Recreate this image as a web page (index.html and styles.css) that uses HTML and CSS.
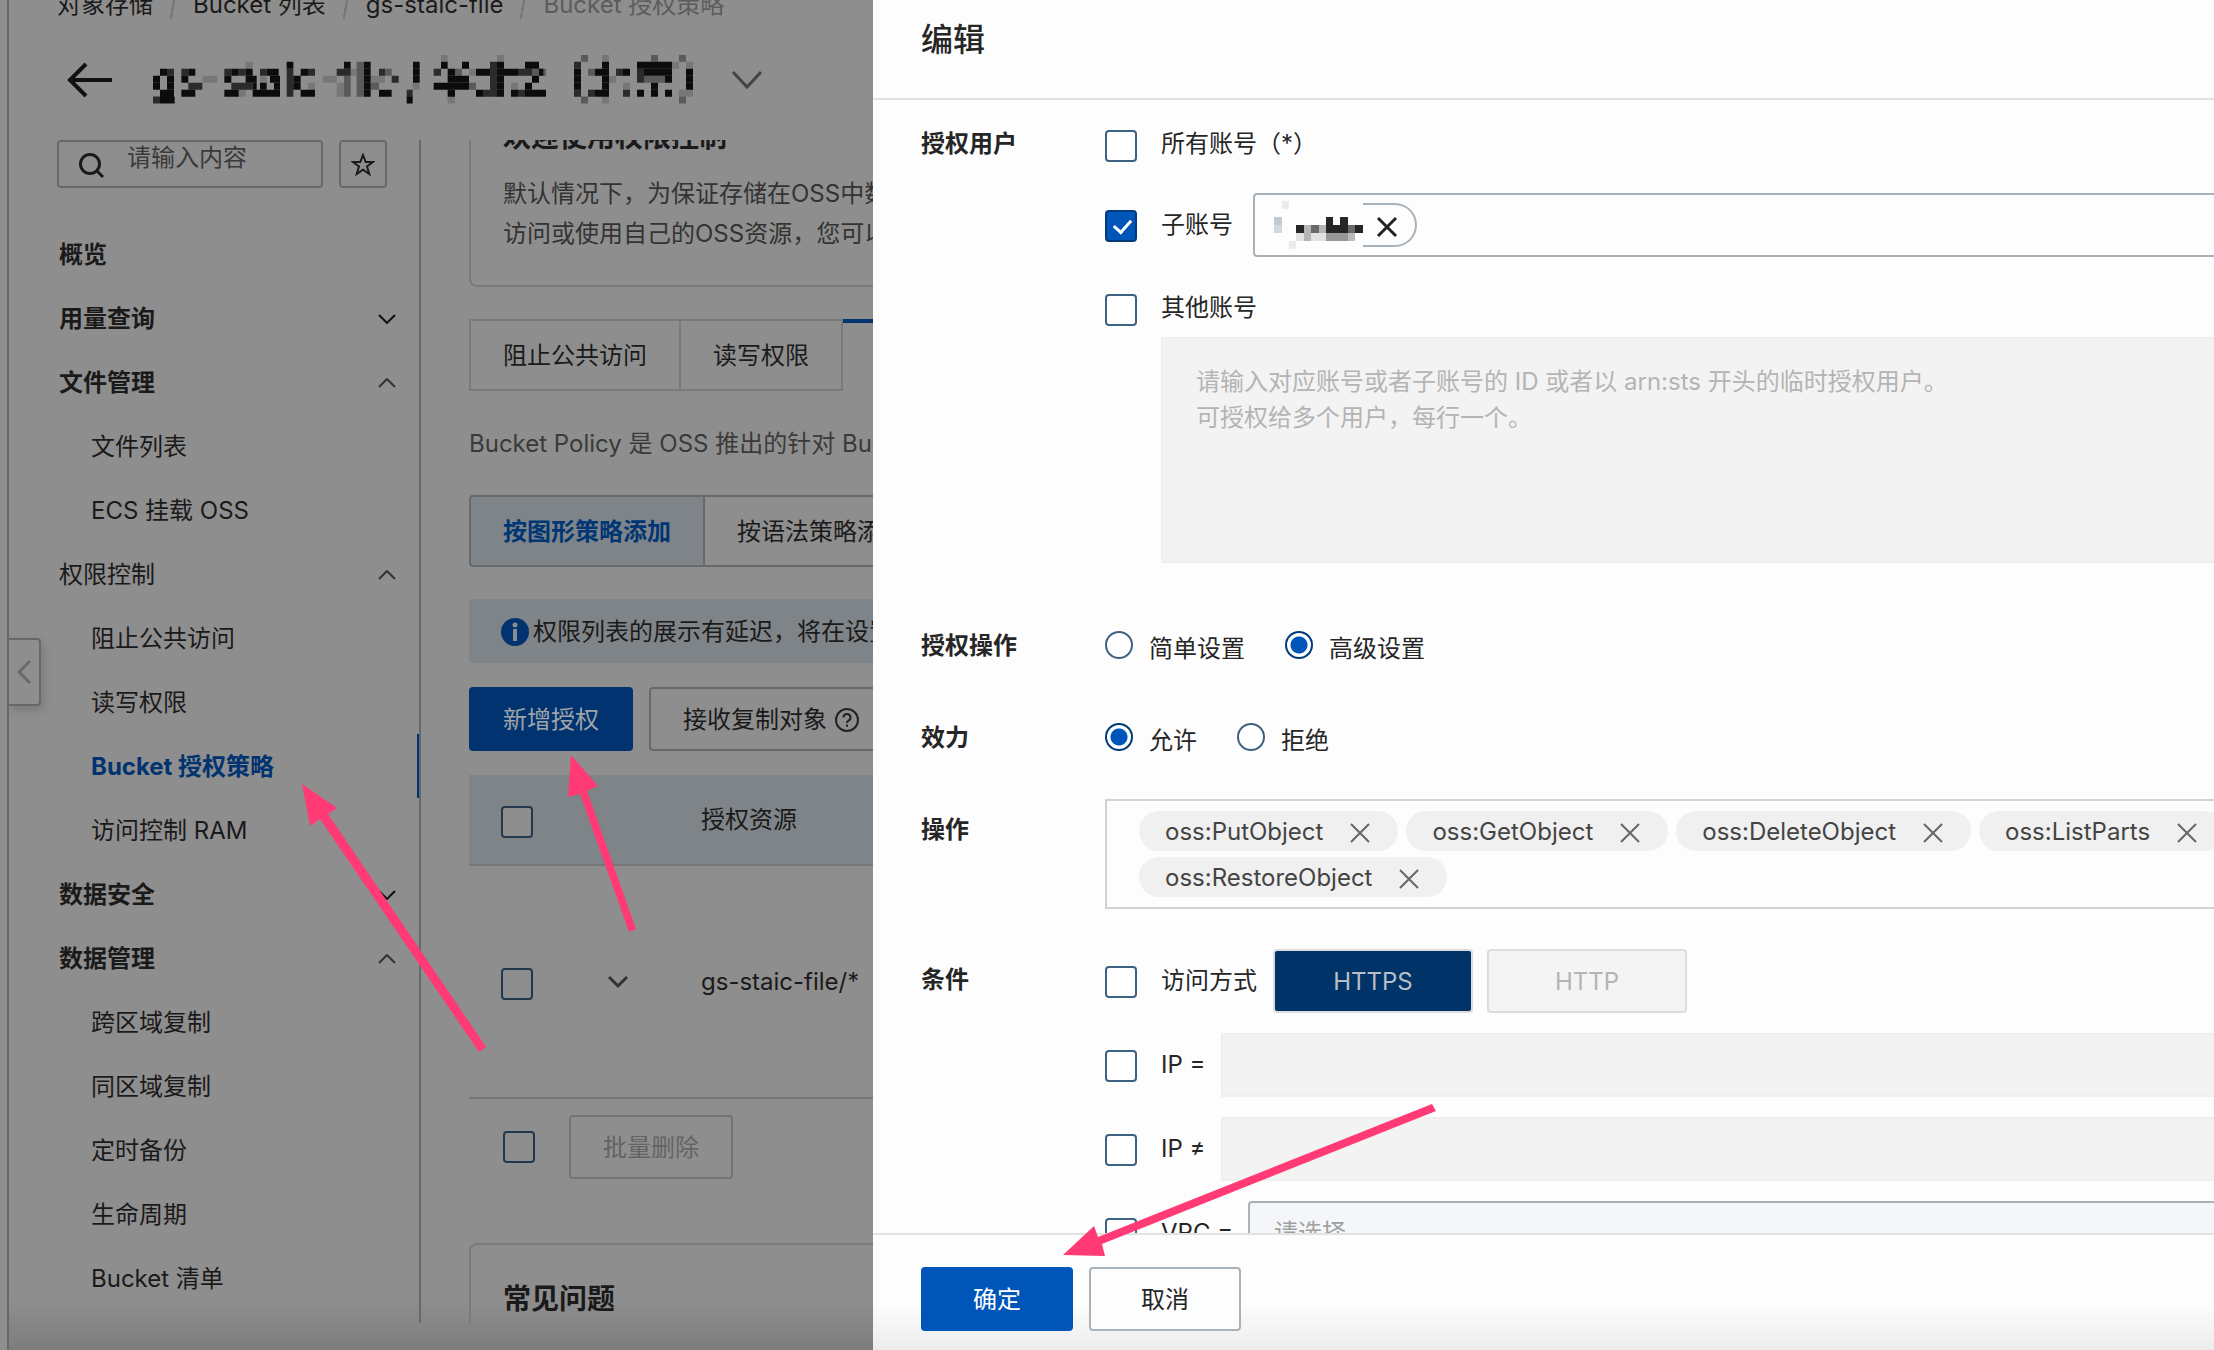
FILE: index.html
```html
<!DOCTYPE html>
<html lang="zh-CN">
<head>
<meta charset="utf-8">
<title>Bucket 授权策略</title>
<link rel="stylesheet" href="styles.css">
</head>
<body>
<div class="app">
  <div class="console">
    <button class="collapse" type="button" aria-label="收起">
      <svg width="14" height="24" viewBox="0 0 14 24"><path d="M13 1 2 12l11 11"/></svg>
    </button>
    <nav class="breadcrumb">
      <a href="#">对象存储</a><span class="sep"></span>
      <a href="#">Bucket 列表</a><span class="sep"></span>
      <a href="#">gs-staic-file</a><span class="sep"></span>
      <span class="current">Bucket 授权策略</span>
    </nav>
    <header class="title-row">
      <button class="plain" type="button" aria-label="返回">
        <svg width="46" height="36" viewBox="0 0 46 36"><path d="M45 18H3M19 2 3 18l16 16" fill="none" stroke="#111" stroke-width="4"/></svg>
      </button>
      <svg class="redacted" width="540" height="49" viewBox="69 42 1620 147" role="img" aria-label="Bucket 名称">
        <g fill="none" stroke-width="21">
          <path stroke="#777" d="M217 115H262M326 157H347M347 73H368M578 115H620M620 136H642M620 157H642M662 94H680M722 115H765M933 52H953M848 136H868M390 115H410M534 136H555M1101 52H1122M953 177H975M1017 94H1038M1416 52H1437M1416 177H1437M1437 115H1458M1458 94H1479M1479 136H1500M1626 73H1647M1668 73H1689M1647 157H1689M1143 136H1164"/>
          <path stroke="#5a5a5a" d="M642 115H662M642 136H662M642 157H662M680 73H702M680 94H702M680 115H702M680 136H702M680 157H702M722 136H747M765 94H785M1353 52H1374M1353 177H1374M1563 52H1584M1647 52H1668M1647 177H1668M1542 115H1605M1374 94H1395M975 94H996M1017 136H1038M1206 94H1248"/>
          <path stroke="#2b2b2b" d="M111 94H132M154 94H175M175 136H217M283 94H304M304 136H368M326 94H347M390 94H410M470 94H490M470 115H490M470 136H490M470 157H490M534 94H555M620 94H662M747 94H765M785 115H806M830 157H848M911 94H933M1080 73H1101M1080 94H1101M1080 115H1101M1080 136H1101M1059 157H1101M1164 157H1185M1164 94H1206M1332 73H1353M1332 157H1353M1374 157H1395M1458 94H1479M1479 157H1500M1521 94H1542M1521 115H1542M69 177H90"/>
          <path stroke="#0c0c0c" d="M470 73H490M642 73H662M702 73H722M849 73H869M933 73H953M996 73H1017M1101 73H1122M1185 73H1227M1416 73H1437M1521 73H1626"/>
          <path stroke="#0c0c0c" d="M90 94H111M175 94H196M304 94H326M347 94H368M410 94H446M512 94H534M702 94H722M849 94H869M953 94H975M1038 94H1080M1101 94H1164M1227 94H1240M1332 94H1353M1395 94H1437M1479 94H1500M1542 94H1626M1668 94H1689"/>
          <path stroke="#0c0c0c" d="M69 115H90M111 115H132M154 115H175M283 115H304M347 115H380M420 115H450M490 115H512M702 115H722M849 115H869M953 115H1017M1101 115H1122M1206 115H1227M1332 115H1353M1416 115H1437M1605 115H1626M1668 115H1689"/>
          <path stroke="#0c0c0c" d="M69 136H90M111 136H132M368 136H380M390 136H410M432 136H450M490 136H512M702 136H722M911 136H1017M1101 136H1122M1185 136H1206M1332 136H1353M1416 136H1437M1563 136H1584M1668 136H1689"/>
          <path stroke="#0c0c0c" d="M90 157H132M154 157H196M283 157H326M368 157H450M512 157H555M702 157H722M747 157H785M953 157H975M1038 157H1059M1101 157H1122M1143 157H1164M1185 157H1248M1395 157H1437M1521 157H1542M1563 157H1584M1605 157H1626M90 177H134M830 177H848"/>
        </g>
      </svg>
      <button class="plain" type="button" aria-label="切换 Bucket">
        <svg width="32" height="20" viewBox="0 0 32 20"><path d="m2 2 14 15L30 2" fill="none" stroke="#444" stroke-width="3"/></svg>
      </button>
    </header>
    <div class="workspace">
      <aside class="sidebar">
        <div class="search-row">
          <label class="search">
            <svg width="26" height="26" viewBox="0 0 26 26"><circle cx="11" cy="11" r="9.500"/><path d="m18 18 6 6"/></svg>
            <input type="text" placeholder="请输入内容" aria-label="请输入内容">
          </label>
          <button class="star" type="button" aria-label="收藏">
            <svg width="24" height="24" viewBox="0 0 24 24"><path d="m12 2 2.700 7H22l-6 4.500 2.300 7.500L12 16.600 5.700 21 8 13.500 2 9h7.300z"/></svg>
          </button>
        </div>
        <ul class="menu">
          <li class="group"><a href="#">概览</a></li>
          <li class="group"><a href="#">用量查询</a><svg width="18" height="10" viewBox="0 0 18 10"><path d="m1 1 8 8 8-8" stroke="#111"/></svg></li>
          <li class="group"><a href="#">文件管理</a><svg width="18" height="10" viewBox="0 0 18 10"><path d="m1 9 8-8 8 8"/></svg></li>
          <li class="item"><a href="#">文件列表</a></li>
          <li class="item"><a href="#">ECS 挂载 OSS</a></li>
          <li class="group open"><a href="#">权限控制</a><svg width="18" height="10" viewBox="0 0 18 10"><path d="m1 9 8-8 8 8"/></svg></li>
          <li class="item"><a href="#">阻止公共访问</a></li>
          <li class="item"><a href="#">读写权限</a></li>
          <li class="item active"><a href="#">Bucket 授权策略</a></li>
          <li class="item"><a href="#">访问控制 RAM</a></li>
          <li class="group"><a href="#">数据安全</a><svg width="18" height="10" viewBox="0 0 18 10"><path d="m1 1 8 8 8-8" stroke="#111"/></svg></li>
          <li class="group"><a href="#">数据管理</a><svg width="18" height="10" viewBox="0 0 18 10"><path d="m1 9 8-8 8 8"/></svg></li>
          <li class="item"><a href="#">跨区域复制</a></li>
          <li class="item"><a href="#">同区域复制</a></li>
          <li class="item"><a href="#">定时备份</a></li>
          <li class="item"><a href="#">生命周期</a></li>
          <li class="item"><a href="#">Bucket 清单</a></li>
        </ul>
      </aside>
      <main class="content">
        <section class="welcome">
          <h2>欢迎使用权限控制</h2>
          <p>默认情况下，为保证存储在OSS中数据<br>访问或使用自己的OSS资源，您可以</p>
        </section>
        <div class="tabs">
          <button type="button">阻止公共访问</button>
          <button type="button">读写权限</button>
          <button type="button" class="on" aria-label="Bucket 授权策略"></button>
        </div>
        <p class="desc">Bucket Policy 是 OSS 推出的针对 Bucket</p>
        <div class="segmented">
          <button type="button" class="on">按图形策略添加</button>
          <button type="button">按语法策略添加</button>
        </div>
        <div class="notice">
          <svg width="28" height="28" viewBox="0 0 28 28"><circle cx="14" cy="14" r="14" fill="#00336f"/><circle cx="14" cy="7" r="2.500" fill="#8a8d90"/><path d="M14 11v12" stroke="#8a8d90" stroke-width="4"/></svg>
          <span>权限列表的展示有延迟，将在设置</span>
        </div>
        <div class="actions">
          <button class="btn primary" type="button">新增授权</button>
          <button class="btn" type="button">接收复制对象
            <svg width="24" height="24" viewBox="0 0 24 24" fill="none" stroke="#222" stroke-width="2"><circle cx="12" cy="12" r="11"/><path d="M8.500 9.500a3.500 3.500 0 1 1 5 3.200c-1.100.6-1.500 1-1.500 2.300M12 16.500v2.200"/></svg>
          </button>
        </div>
        <table class="grid">
          <thead>
            <tr><th class="c-check"><input type="checkbox" aria-label="全选"></th><th class="c-open"></th><th>授权资源</th></tr>
          </thead>
          <tbody>
            <tr><td><input type="checkbox" aria-label="选择 gs-staic-file/*"></td><td><svg width="22" height="14" viewBox="0 0 22 14"><path d="m2 2 9 9 9-9" fill="none" stroke="#333" stroke-width="3"/></svg></td><td>gs-staic-file/*</td></tr>
          </tbody>
        </table>
        <div class="batch">
          <input type="checkbox" aria-label="全选本页">
          <button class="btn" type="button" disabled>批量删除</button>
        </div>
        <section class="faq"><h2>常见问题</h2></section>
      </main>
    </div>
  </div>

  <form class="drawer">
    <header class="drawer-head"><h1>编辑</h1></header>
    <div class="drawer-body">
      <div class="form-row users">
        <span class="label">授权用户</span>
        <div class="stack">
          <label class="check"><input type="checkbox"><span>所有账号（*）</span></label>
          <div class="line">
            <label class="check"><input type="checkbox" checked><span>子账号</span></label>
            <div class="picker">
              <svg width="89" height="48" viewBox="0 0 89 48" aria-hidden="true">
                <path fill="#e9ecee" d="M8 0h7v8H8zM15 40h7v8h-7z"/><path fill="#c3cad1" d="M0 16h8v8H0z"/><path fill="#d3d9de" d="M0 24h8v8H0z"/>
                <path fill="#262626" d="M22 24h8v8h-8zM52 16h7v8h7v-8h8v8h15v8H52z"/><path fill="#696969" d="M37 24h8v8h-8zM74 24h7v8h-7z"/><path fill="#b5b5b5" d="M30 24h7v16h-7zM45 24h7v8h-7z"/><path fill="#e2e2e2" d="M22 32h8v8h-8zM37 32h15v8H37z"/><path fill="#979797" d="M52 32h22v8H52z"/><path fill="#bbb" d="M74 32h7v8h-7z"/>
              </svg>
              <button class="chip-end" type="button" aria-label="移除"><svg width="22" height="22" viewBox="0 0 22 22"><path d="m2 2 18 18M20 2 2 20" stroke="#222" stroke-width="3"/></svg></button>
            </div>
          </div>
          <div>
            <label class="check"><input type="checkbox"><span>其他账号</span></label>
            <div class="accounts">
              <textarea disabled aria-label="其他账号" placeholder="请输入对应账号或者子账号的 ID 或者以 arn:sts 开头的临时授权用户。&#10;可授权给多个用户，每行一个。"></textarea>
            </div>
          </div>
        </div>
      </div>
      <div class="form-row choice">
        <span class="label">授权操作</span>
        <div class="radios">
          <label class="radio"><input type="radio" name="mode"><span>简单设置</span></label>
          <label class="radio"><input type="radio" name="mode" checked><span>高级设置</span></label>
        </div>
      </div>
      <div class="form-row choice">
        <span class="label">效力</span>
        <div class="radios">
          <label class="radio"><input type="radio" name="effect" checked><span>允许</span></label>
          <label class="radio"><input type="radio" name="effect"><span>拒绝</span></label>
        </div>
      </div>
      <div class="form-row">
        <span class="label">操作</span>
        <div class="tags">
          <div class="tag-line">
            <span class="tag">oss:PutObject<button type="button" aria-label="移除"><svg width="22" height="22" viewBox="0 0 22 22"><path d="m2 2 18 18M20 2 2 20"/></svg></button></span>
            <span class="tag">oss:GetObject<button type="button" aria-label="移除"><svg width="22" height="22" viewBox="0 0 22 22"><path d="m2 2 18 18M20 2 2 20"/></svg></button></span>
            <span class="tag">oss:DeleteObject<button type="button" aria-label="移除"><svg width="22" height="22" viewBox="0 0 22 22"><path d="m2 2 18 18M20 2 2 20"/></svg></button></span>
            <span class="tag">oss:ListParts<button type="button" aria-label="移除"><svg width="22" height="22" viewBox="0 0 22 22"><path d="m2 2 18 18M20 2 2 20"/></svg></button></span>
          </div>
          <div class="tag-line">
            <span class="tag">oss:RestoreObject<button type="button" aria-label="移除"><svg width="22" height="22" viewBox="0 0 22 22"><path d="m2 2 18 18M20 2 2 20"/></svg></button></span>
          </div>
        </div>
      </div>
      <div class="form-row">
        <span class="label">条件</span>
        <div class="stack">
          <div class="line">
            <label class="check"><input type="checkbox"><span>访问方式</span></label>
            <div class="protocols"><button class="proto on" type="button" disabled>HTTPS</button><button class="proto" type="button" disabled>HTTP</button></div>
          </div>
          <div class="line">
            <label class="check ip"><input type="checkbox"><span>IP =</span></label>
            <input class="field" type="text" disabled aria-label="IP 等于">
          </div>
          <div class="line">
            <label class="check ip"><input type="checkbox"><span>IP ≠</span></label>
            <input class="field" type="text" disabled aria-label="IP 不等于">
          </div>
          <div class="line">
            <label class="check"><input type="checkbox"><span>VPC =</span></label>
            <select class="field vpc" aria-label="VPC 等于"><option>请选择</option></select>
          </div>
        </div>
      </div>
    </div>
    <footer class="drawer-foot">
      <button class="btn primary" type="button">确定</button>
      <button class="btn" type="button">取消</button>
    </footer>
  </form>

  <svg class="arrows" width="2214" height="1350" viewBox="0 0 2214 1350" aria-hidden="true">
    <path d="m302 784 35 24-9 6 158 233-7 5-159-233-10 7z"/>
    <path d="m571 755 27 31-11 5 49 138-7 3-49-138-12 3z"/>
    <path d="m1063 1255 31-29 4 11 334-133 4 7-334 133 3 12z"/>
  </svg>
</div>
</body>
</html>
```

FILE: styles.css
```css
* { box-sizing: border-box; }

body {
  margin: 0;
  overflow: hidden;
  color: #222;
  font-family: Inter, "Noto Sans CJK SC", sans-serif;
  font-size: 24px;
  line-height: 36px;
}

button, input, textarea, select { font: inherit; color: inherit; }
button { margin: 0; padding: 0; background: none; border: 0; white-space: nowrap; }
a { color: inherit; text-decoration: none; }
h1, h2, p, ul { margin: 0; padding: 0; }

.app {
  position: relative;
  display: grid;
  grid-template-columns: minmax(0, 873fr) minmax(0, 1341fr);
  height: 100vh;
  overflow: hidden;
  background: #8e8e8e;
}

/* Dimmed console page */
.console {
  position: relative;
  display: flex;
  flex-direction: column;
  min-width: 0;
  height: 100vh;
  margin-left: 7px;
  padding: 0 0 27px 48px;
  overflow: hidden;
  background: linear-gradient(#8e8e8e calc(100% - 50px), #7d7d7d);
  border-left: 2px solid #66696c;
  color: #1a1a1a;
}

.collapse {
  position: absolute;
  left: 0;
  top: 638px;
  width: 32px;
  height: 68px;
  border: 2px solid #66696c;
  border-left: 0;
  border-radius: 0 4px 4px 0;
  box-shadow: 2px 4px 8px rgba(0, 0, 0, .15);
}
.collapse svg { display: block; margin: 0 auto; fill: none; stroke: #6a6a6a; stroke-width: 3; }

.breadcrumb {
  display: flex;
  flex: none;
  align-items: center;
  height: 36px;
  margin-top: -13px;
  white-space: nowrap;
}
.sep { width: 40px; height: 28px; background: linear-gradient(100deg, transparent 48%, #777 48%, #777 53%, transparent 53%); }
.current { color: #5c5c5c; }

.title-row {
  display: flex;
  flex: none;
  align-items: center;
  height: 117px;
  padding: 0 0 4px 10px;
}
.plain { display: flex; }
.redacted { margin: 0 38px 0 40px; }

.workspace { display: flex; flex: 1; min-height: 0; }

.sidebar { flex: none; width: 364px; border-right: 2px solid #66696c; }
.search-row { display: flex; gap: 16px; margin-bottom: 34px; }
.search {
  display: flex;
  align-items: center;
  width: 266px;
  height: 48px;
  padding-left: 20px;
  border: 2px solid #66696c;
  border-radius: 4px;
}
.search svg { flex: none; margin-top: 4px; fill: none; stroke: #1a1a1a; stroke-width: 3; }
.search input {
  width: 180px;
  height: 44px;
  padding: 0 0 14px 22px;
  background: none;
  border: 0;
}
.search input::placeholder { color: #3a3a3a; }
.star {
  display: flex;
  align-items: center;
  justify-content: center;
  width: 48px;
  height: 48px;
  padding-top: 2px;
  border: 2px solid #66696c;
  border-radius: 4px;
}
.star svg { fill: none; stroke: #1a1a1a; stroke-width: 2; }

.menu { list-style: none; }
.menu li {
  display: flex;
  align-items: center;
  justify-content: space-between;
  height: 64px;
  padding: 2px 23px 0 2px;
}
.menu svg { fill: none; stroke: #333; stroke-width: 2; }
.menu .group { font-weight: 700; }
.menu .open { font-weight: 400; }
.menu .item { padding-left: 34px; }
.menu .active { border-right: 2px solid #00336f; color: #00336f; font-weight: 700; }

.content { flex: 1; min-width: 0; margin-left: 48px; overflow: hidden; white-space: nowrap; }
.welcome {
  display: flex;
  flex-direction: column;
  height: 147px;
  padding-left: 32px;
  border: 2px solid #7a7a7a;
  border-top: 0;
  border-right: 0;
  border-radius: 0 0 0 8px;
}
.welcome h2, .faq h2 { font-size: 28px; line-height: 40px; }
.welcome h2 { margin-top: -23px; }
.welcome p { margin-top: 17px; color: #333; line-height: 40px; }

.tabs { display: flex; height: 72px; margin-top: 32px; }
.tabs button { flex: none; padding: 2px 32px 0; border: 2px solid #7a7a7a; border-left: 0; }
.tabs button:first-child { border-left: 2px solid #7a7a7a; }
.tabs .on { flex: 1; border: 0; border-top: 4px solid #00336f; }

.desc { margin-top: 35px; color: #3a3a3a; }

.segmented { display: flex; height: 72px; margin-top: 33px; }
.segmented button { flex: none; padding: 2px 32px 0; border: 2px solid #66696c; border-left: 0; }
.segmented .on {
  background: #7f8488;
  border-left: 2px solid #66696c;
  border-radius: 4px 0 0 4px;
  color: #003675;
  font-weight: 700;
}

.notice {
  display: flex;
  align-items: center;
  gap: 4px;
  height: 64px;
  margin-top: 32px;
  padding: 2px 0 0 32px;
  background: #7f8488;
  border-radius: 4px 0 0 4px;
}
.notice svg { flex: none; }

.actions { display: flex; gap: 16px; margin: 24px 0; }
.btn {
  display: flex;
  flex: none;
  align-items: center;
  justify-content: center;
  gap: 8px;
  height: 64px;
  padding: 2px 32px 0;
  border: 2px solid #66696c;
  border-radius: 4px;
}
.console .primary { background: #00336f; border-color: #00336f; color: #a0a4a8; }

.grid { width: 100%; border-collapse: collapse; table-layout: fixed; }
.grid th, .grid td { padding: 0; border-bottom: 2px solid #777; font-weight: 400; text-align: left; }
.grid th { height: 90px; background: #7f8488; }
.grid td { height: 233px; }
.grid .c-check { width: 138px; }
.grid .c-open { width: 94px; }
.grid input { margin: 4px 0 0 32px; }
.grid input, .grid svg { display: block; }

input[type="checkbox"] {
  flex: none;
  position: relative;
  width: 32px;
  height: 32px;
  appearance: none;
  background: #fff;
  border: 2px solid #3e6284;
  border-radius: 4px;
}
.console input[type="checkbox"] { background: #8e8e8e; border-color: #24384b; }
input[type="checkbox"]:checked { background: #0055b8; border-color: #003a78; }
input[type="checkbox"]:checked::after {
  content: "";
  position: absolute;
  left: 10px;
  top: 4px;
  width: 8px;
  height: 14px;
  border: solid #fff;
  border-width: 0 3px 3px 0;
  transform: rotate(42deg);
}

.batch { display: flex; align-items: center; gap: 34px; margin-top: 16px; padding-left: 34px; }
.batch input { margin: 0; }
.batch .btn { border-color: #73737a; color: #646464; }

.faq {
  height: 200px;
  margin-top: 64px;
  padding: 34px 32px;
  border: 2px solid #7a7a7a;
  border-right: 0;
  border-radius: 8px 0 0 0;
}

/* Edit drawer */
.drawer {
  display: flex;
  flex-direction: column;
  min-width: 0;
  height: 100vh;
  background: #fdfdfd;
  box-shadow: -1px 0 2px rgba(255, 255, 255, .5);
  color: #262626;
}
.drawer-head { flex: none; height: 100px; padding: 16px 48px; border-bottom: 2px solid #e2e2e2; }
.drawer-head h1 { font-size: 32px; font-weight: 500; line-height: 48px; }

.drawer-body { flex: 1; min-height: 0; padding: 13px 0 0 48px; overflow: hidden; }
.form-row {
  display: grid;
  grid-template-columns: 184px minmax(0, 1fr);
  margin-bottom: 40px;
}
.label { font-weight: 700; line-height: 62px; }
.users { margin-bottom: 52px; }
.choice { padding-top: 10px; }
.choice .label { line-height: 42px; }

.stack { display: flex; flex-direction: column; gap: 20px; min-width: 0; }
.line { display: flex; align-items: center; }
.check { display: flex; flex: none; align-items: center; gap: 24px; height: 60px; padding-top: 2px; }
.check input { margin: 4px 0 0; }
.line .check { padding-top: 0; }
.line .check input { margin-top: 2px; }
.ip { width: 116px; }

.picker {
  display: flex;
  flex: 1;
  align-items: center;
  height: 64px;
  margin-left: 20px;
  padding-left: 19px;
  border: 2px solid #aab2b9;
  border-right: 0;
  border-radius: 4px 0 0 4px;
}
.chip-end {
  display: flex;
  align-items: center;
  width: 54px;
  height: 44px;
  padding: 3px 0 0 13px;
  border: 2px solid #aab2b9;
  border-left: 0;
  border-radius: 0 22px 22px 0;
}

.accounts { padding-left: 56px; }
textarea {
  display: block;
  width: 100%;
  height: 226px;
  padding: 25px 33px;
  background: #f3f3f3;
  border: 2px solid #efefef;
  border-right: 0;
  resize: none;
}
textarea::placeholder { color: #b4b4b4; }

.radios { display: flex; gap: 40px; }
.radio { display: flex; gap: 16px; }
.radio span { padding-top: 6px; }
.radio input {
  width: 28px;
  height: 28px;
  margin: 6px 0 0;
  appearance: none;
  background: #fff;
  border: 2px solid #3e6284;
  border-radius: 50%;
}
.radio input:checked { background: radial-gradient(circle, #0055b8 8px, #fff 9px); border-color: #003a78; }

.tags {
  display: flex;
  flex-direction: column;
  gap: 6px;
  height: 110px;
  padding: 10px 0 0 32px;
  overflow: hidden;
  border: 2px solid #d2d2d2;
  border-right: 0;
}
.tag-line { display: flex; gap: 8px; }
.tag {
  display: flex;
  flex: none;
  align-items: center;
  gap: 26px;
  height: 40px;
  padding: 1px 27px 0 26px;
  background: #f0f0f0;
  border-radius: 20px;
  color: #444;
}
.tag button { display: flex; }
.tag svg { margin-top: 2px; stroke: #666; stroke-width: 2; }

.protocols { display: flex; gap: 14px; margin-left: 16px; }
.proto {
  width: 200px;
  height: 64px;
  padding-top: 2px;
  background: #f4f4f4;
  border: 2px solid #dcdce0;
  border-radius: 4px;
  color: #b4b4b4;
}
.proto.on { background: #003468; color: #b9bec4; }

.field { flex: 1; min-width: 0; height: 64px; background: #f3f3f3; border: 2px solid #efefef; border-right: 0; }
.vpc {
  margin-left: 15px;
  padding: 0 24px;
  appearance: none;
  background: #f4f6f9;
  border-color: #aab2b9;
  border-radius: 4px 0 0 4px;
  color: #a0a0a0;
}

.drawer-foot {
  display: flex;
  flex: none;
  gap: 16px;
  height: 117px;
  padding: 32px 48px 0;
  background: linear-gradient(#fdfdfd 60%, #ececec);
  border-top: 2px solid #e2e2e2;
}
.drawer-foot .btn { width: 152px; border-color: #aab2b9; background: #fdfdfd; }
.drawer-foot .primary { background: #0055b8; border-color: #0055b8; color: #fff; }

/* Pointers laid over the whole screen */
.arrows { position: absolute; left: 0; top: 0; fill: #ff3a75; pointer-events: none; }
```
